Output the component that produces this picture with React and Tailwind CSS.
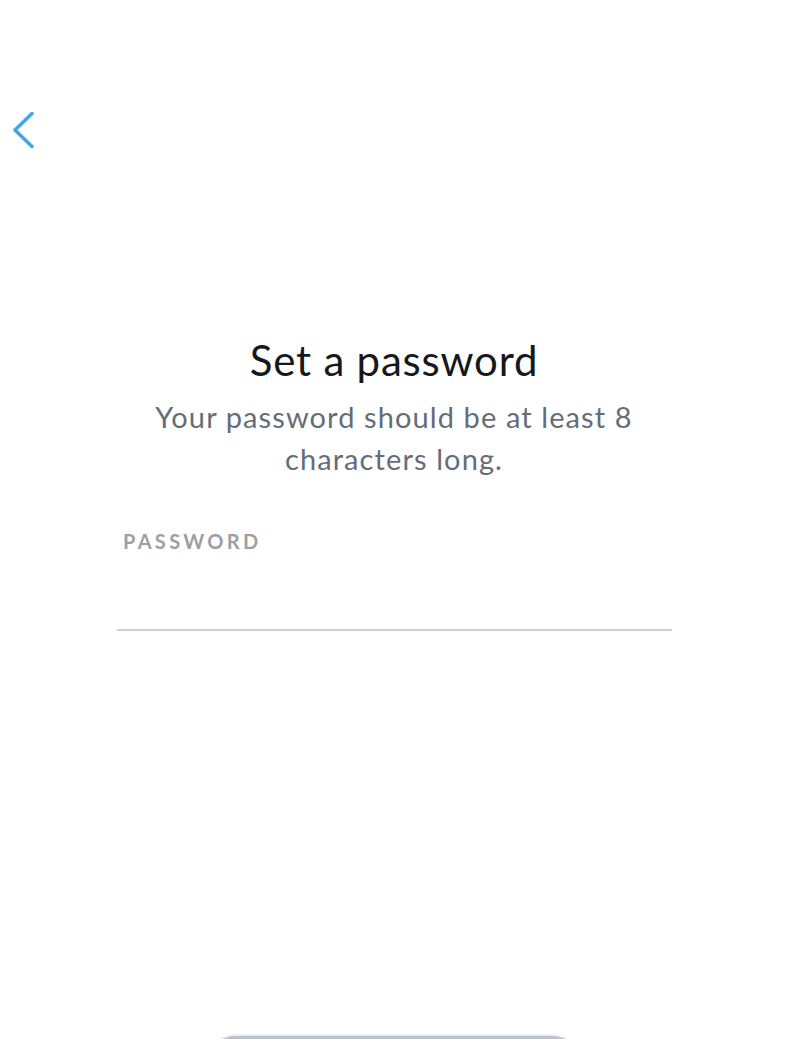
export default function App() {
  return (
    <div
      className="relative h-[1039px] w-full overflow-hidden bg-white"
      style={{ fontFamily: "Lato, 'Noto Sans', sans-serif" }}
    >
      {/* Back button */}
      <button className="ml-[10px] mt-[110px] block h-[40px] w-[24px]">
        <svg width="24" height="40" viewBox="0 0 24 40" fill="none">
          <path
            d="M22 3.5 L5 20 L22 36.5"
            stroke="#3ea8e2"
            strokeWidth="3.5"
            strokeLinecap="round"
            strokeLinejoin="round"
          />
        </svg>
      </button>

      <div className="mt-[185px] flex flex-col items-center pr-[19px]">
        <h1 className="text-[42px] leading-[50px] tracking-[0.8px] text-[#16191c]">
          Set a password
        </h1>
        <p className="mt-[11px] w-[520px] text-center text-[29px] leading-[42px] tracking-[1.1px] text-[#656d78]">
          Your password should be at least 8 characters long.
        </p>
      </div>

      {/* Password field */}
      <div className="ml-[117px] mr-[135px] mt-[49px]">
        <label className="block pl-[6px] text-[20px] font-bold leading-[24px] tracking-[3.3px] text-[#9ba0a7]">
          PASSWORD
        </label>
        <input
          type="password"
          className="mt-[4px] h-[74px] w-full border-b-2 border-[#cfd3d7] bg-transparent outline-none"
        />
      </div>

      {/* Continue button peeking from bottom */}
      <div className="ml-[206px] mt-[405px] h-[60px] w-[376px] rounded-full bg-[#b9c2ca] shadow-[0_-1px_3px_rgba(0,0,0,0.12)]" />
    </div>
  );
}
